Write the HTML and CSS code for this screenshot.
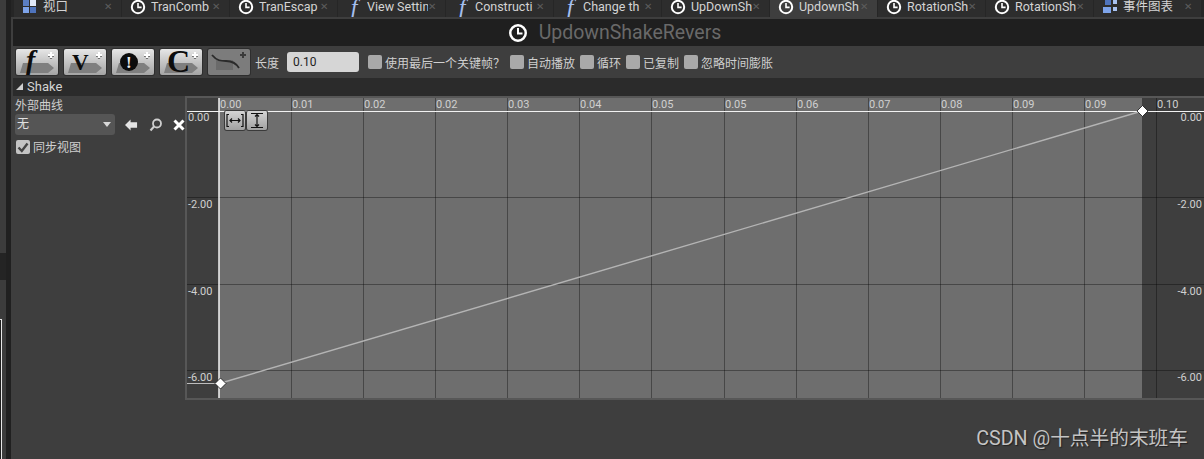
FILE: index.html
```html
<!DOCTYPE html>
<html lang="zh-CN">
	<head>
		<meta charset="UTF-8">
		<title>UpdownShakeRevers</title>
		<link rel="stylesheet" href="styles.css">
	</head>
	<body>
		<svg width="0" height="0" class="defs">
			<defs>
				<g id="clock">
					<circle cx="8" cy="8" r="6.2" fill="none" stroke="#fff" stroke-width="2"/>
					<path d="M8 4v4.4h3.6" fill="none" stroke="#fff" stroke-width="1.6"/>
				</g>
				<path id="btn-arrow" d="M7 14H32L38 19L32 24H4Z" fill="#7f7f7f"/>
				<g id="btn-plus">
					<path d="M32 7h6M35 4v6" stroke="#333" stroke-width="2.2" stroke-opacity="0.6"/>
					<path d="M32 6h6M35 3v6" stroke="#fff" stroke-width="2.2"/>
				</g>
			</defs>
		</svg>

		<div class="page">
			<div class="edge">
				<div class="edge-outer">
					<div class="edge-block"></div>
				</div>
				<div class="edge-inner"></div>
			</div>
			<div class="other-window"></div>

			<div class="main">
				<div class="tabs">
					<div class="tab">
						<svg class="tab-icon" viewBox="0 0 16 16"><path d="M1 1h6v6H1z" fill="#5b7fc4"/><path d="M8 1h6v6H8z" fill="#dfe8f8"/><path d="M1 8h6v6H1z" fill="#7ea4ea"/><path d="M8 8h6v6H8z" fill="#4f74bd"/></svg>
						<span class="tab-name">视口</span><span class="tab-x">✕</span>
					</div>
					<div class="tab">
						<svg class="tab-icon" viewBox="0 0 16 16"><use href="#clock"/></svg>
						<span class="tab-name">TranComb</span><span class="tab-x">✕</span>
					</div>
					<div class="tab">
						<svg class="tab-icon" viewBox="0 0 16 16"><use href="#clock"/></svg>
						<span class="tab-name">TranEscap</span><span class="tab-x">✕</span>
					</div>
					<div class="tab">
						<span class="tab-icon func">f</span>
						<span class="tab-name">View Settin</span><span class="tab-x">✕</span>
					</div>
					<div class="tab">
						<span class="tab-icon func">f</span>
						<span class="tab-name">Constructi</span><span class="tab-x">✕</span>
					</div>
					<div class="tab">
						<span class="tab-icon func">f</span>
						<span class="tab-name">Change th</span><span class="tab-x">✕</span>
					</div>
					<div class="tab">
						<svg class="tab-icon" viewBox="0 0 16 16"><use href="#clock"/></svg>
						<span class="tab-name">UpDownSh</span><span class="tab-x">✕</span>
					</div>
					<div class="tab active">
						<svg class="tab-icon" viewBox="0 0 16 16"><use href="#clock"/></svg>
						<span class="tab-name">UpdownSh</span><span class="tab-x">✕</span>
					</div>
					<div class="tab">
						<svg class="tab-icon" viewBox="0 0 16 16"><use href="#clock"/></svg>
						<span class="tab-name">RotationSh</span><span class="tab-x">✕</span>
					</div>
					<div class="tab">
						<svg class="tab-icon" viewBox="0 0 16 16"><use href="#clock"/></svg>
						<span class="tab-name">RotationSh</span><span class="tab-x">✕</span>
					</div>
					<div class="tab">
						<svg class="tab-icon" viewBox="0 0 16 16"><path d="M1 8h8v6H1z" fill="#7ea4ea"/><path d="M3 1h6v5H3z" fill="#4f74bd"/><path d="M11 1h4v4h-4z" fill="#a9c3f2"/><path d="M11 8h4v4h-4z" fill="#a9c3f2"/></svg>
						<span class="tab-name">事件图表</span><span class="tab-x">✕</span>
					</div>
				</div>

				<div class="title-bar">
					<svg class="title-icon" viewBox="0 0 16 16"><use href="#clock"/></svg>
					<span class="title-text">UpdownShakeRevers</span>
				</div>

				<div class="toolbar">
					<div class="tool-btn">
						<svg viewBox="0 0 42 26"><use href="#btn-arrow"/><text x="10" y="20" class="glyph glyph-f">f</text><use href="#btn-plus"/></svg>
					</div>
					<div class="tool-btn">
						<svg viewBox="0 0 42 26"><use href="#btn-arrow"/><text x="8" y="21" class="glyph glyph-v">V</text><use href="#btn-plus"/></svg>
					</div>
					<div class="tool-btn">
						<svg viewBox="0 0 42 26"><use href="#btn-arrow"/><circle cx="17" cy="13" r="9" fill="#0c0c0c"/><text x="14" y="19" class="glyph glyph-bang">!</text><use href="#btn-plus"/></svg>
					</div>
					<div class="tool-btn">
						<svg viewBox="0 0 42 26"><use href="#btn-arrow"/><text x="7" y="23" class="glyph glyph-c">C</text><use href="#btn-plus"/></svg>
					</div>
					<div class="tool-btn off">
						<svg viewBox="0 0 42 26"><path d="M8 11H25V21H8z" fill="#6a6a6a"/><path d="M4 6C9 12 13 12 18 12S28 14 31 19" fill="none" stroke="#2a2a2a" stroke-width="1.8"/><path d="M32 6h6M35 3v6" stroke="#3a3a3a" stroke-width="2"/></svg>
					</div>
					<span class="len-label">长度</span>
					<div class="len-input">0.10</div>
					<div class="opts">
						<label class="opt"><i class="box"></i>使用最后一个关键帧？</label>
						<label class="opt"><i class="box"></i>自动播放</label>
						<label class="opt"><i class="box"></i>循环</label>
						<label class="opt"><i class="box"></i>已复制</label>
						<label class="opt"><i class="box"></i>忽略时间膨胀</label>
					</div>
				</div>

				<div class="section-head"><i class="arrow-down"></i>Shake</div>

				<div class="section-body">
					<div class="curve-side">
						<div class="side-label">外部曲线</div>
						<div class="asset-row">
							<div class="select">无<i class="caret"></i></div>
							<svg class="asset-icon back" viewBox="0 0 14 12"><path d="M0 6L6 0V3H13V9H6V12Z" fill="#e4e4e4"/></svg>
							<svg class="asset-icon find" viewBox="0 0 14 14"><circle cx="8" cy="5.5" r="4" fill="none" stroke="#d0d0d0" stroke-width="1.8"/><path d="M5 8.5L1.5 12.5" stroke="#d0d0d0" stroke-width="2"/></svg>
							<svg class="asset-icon clear" viewBox="0 0 12 12"><path d="M1.5 1.5L10.5 10.5M10.5 1.5L1.5 10.5" stroke="#fff" stroke-width="3"/></svg>
						</div>
						<label class="sync"><i class="box checked"><svg viewBox="0 0 14 14"><path d="M2.5 7.5L5.8 11L11.5 3.5" fill="none" stroke="#444" stroke-width="2.4"/></svg></i>同步视图</label>
					</div>

					<div class="graph">
						<svg viewBox="187 98 1017 300" width="1017" height="300">
							<rect x="187" y="98" width="1017" height="300" fill="#3e3e3e"/>
							<rect x="219" y="98" width="923" height="300" fill="#6e6e6e"/>
							<g class="grid">
								<path d="M291 98V398M363 98V398M435 98V398M507 98V398M579 98V398M651 98V398M724 98V398M796 98V398M868 98V398M940 98V398M1012 98V398M1084 98V398M1156 98V398"/>
								<path d="M187 197H1204M187 284H1204M187 370H1204"/>
							</g>
							<path d="M219 98V398" stroke="#fff" stroke-width="1.4"/>
							<path d="M187 111.5H1204" stroke="#f2f2f2" stroke-width="1.2"/>
							<path d="M187 383.5H216" stroke="#bdbdbd"/>
							<path d="M221 383L1142 111" stroke="#b4b4b4" stroke-width="1.4"/>
							<g class="ruler">
								<text x="220" y="108">0.00</text>
								<text x="292" y="108">0.01</text>
								<text x="364" y="108">0.02</text>
								<text x="436" y="108">0.02</text>
								<text x="508" y="108">0.03</text>
								<text x="580" y="108">0.04</text>
								<text x="652" y="108">0.05</text>
								<text x="725" y="108">0.05</text>
								<text x="797" y="108">0.06</text>
								<text x="869" y="108">0.07</text>
								<text x="941" y="108">0.08</text>
								<text x="1013" y="108">0.09</text>
								<text x="1085" y="108">0.09</text>
								<text x="1157" y="108">0.10</text>
							</g>
							<g class="ruler">
								<text x="188" y="121">0.00</text>
								<text x="188" y="208">-2.00</text>
								<text x="188" y="295">-4.00</text>
								<text x="188" y="381">-6.00</text>
							</g>
							<g class="ruler right">
								<text x="1202" y="121">0.00</text>
								<text x="1202" y="208">-2.00</text>
								<text x="1202" y="295">-4.00</text>
								<text x="1202" y="381">-6.00</text>
							</g>
							<path class="key" d="M220.5 378L226 383.5L220.5 389L215 383.5Z"/>
							<path class="key" d="M1142.5 105.5L1148 111L1142.5 116.5L1137 111Z"/>
						</svg>
						<div class="fit-btns">
							<div class="fit-btn"><svg viewBox="0 0 20 18"><path d="M4 3H2V15H4M16 3H18V15H16M5 9H15M7 7L5 9L7 11M13 7L15 9L13 11" fill="none" stroke="#111" stroke-width="1.2"/></svg></div>
							<div class="fit-btn"><svg viewBox="0 0 20 18"><path d="M4 2H16M4 16H16M10 3V15M8 5L10 3L12 5M8 13L10 15L12 13" fill="none" stroke="#111" stroke-width="1.2"/></svg></div>
						</div>
					</div>
				</div>

				<div class="watermark">CSDN @十点半的末班车</div>
			</div>
		</div>
	</body>
</html>
```

FILE: styles.css
```css
body {
	margin: 0;
	background-color: #3e3e3e;
	color: #cfcfcf;
	font-family: Roboto, "Noto Sans CJK SC", sans-serif;
	font-size: 12px;
	overflow: hidden;
}

.defs {
	position: absolute;
}

.page {
	display: flex;
	position: relative;
	width: 1204px;
	height: 459px;
	overflow: hidden;
}

/* strip of the window behind, left of the editor */
.edge {
	display: flex;
	flex: 0 0 11px;
}

.edge-outer {
	flex: 0 0 6px;
	padding-top: 253px;
	background-color: #3c3c3c;
}

.edge-block {
	height: 27px;
	background-color: #242424;
}

.edge-inner {
	flex: 0 0 5px;
	background-color: #202020;
}

.other-window {
	position: absolute;
	left: -1px;
	top: 319px;
	width: 1px;
	height: 140px;
	border: 1px solid #e8e8e8;
	background-color: #1e1e1e;
}

.main {
	position: relative;
	display: flex;
	flex-direction: column;
	flex: 1;
	min-width: 0;
}

.tabs {
	display: flex;
	height: 17px;
	padding-left: 3px;
	margin-bottom: 2px;
	background-color: #262626;
	box-shadow: 0 2px 0 #3e3e3e;
}

.tab {
	display: flex;
	align-items: center;
	flex: 0 0 107px;
	height: 17px;
	padding: 0 0 4px 8px;
	box-sizing: border-box;
	margin-right: 1px;
	background-color: #2d2d2d;
	overflow: hidden;
}

.tab.active {
	background-color: #3e3e3e;
}

.tab-icon {
	flex: 0 0 16px;
	width: 16px;
	height: 16px;
	margin-right: 5px;
}

.func {
	color: #a5bfee;
	font-family: "Liberation Serif", serif;
	font-style: italic;
	font-size: 24px;
	line-height: 16px;
	text-align: center;
}

.tab-name {
	flex: 0 0 61px;
	width: 61px;
	overflow: hidden;
	white-space: nowrap;
	font-size: 12.5px;
	line-height: 17px;
	color: #d4d4d4;
}

.tab-x {
	font-size: 10px;
	color: #5c5c5c;
}

.title-bar {
	display: flex;
	align-items: center;
	justify-content: center;
	gap: 11px;
	height: 27px;
	margin-left: 2px;
	padding-left: 12px;
	background-color: #1f1f1f;
}

.title-icon {
	width: 20px;
	height: 20px;
}

.title-text {
	font-size: 19.5px;
	color: #696969;
}

.toolbar {
	display: flex;
	align-items: center;
	height: 32px;
	margin-left: 2px;
	padding-left: 3px;
	background-color: #3e3e3e;
}

.tool-btn {
	flex: 0 0 42px;
	height: 26px;
	margin-right: 6px;
	border-radius: 2px;
	background: linear-gradient(#e6e6e6, #a4a4a4);
	box-shadow: 0 0 0 1px #2e2e2e;
}

.tool-btn svg {
	display: block;
	width: 42px;
	height: 26px;
}

.tool-btn.off {
	background: #7c7c7c;
}

.glyph {
	font-family: "Liberation Serif", serif;
	font-weight: bold;
	fill: #0c0c0c;
}

.glyph-f {
	font-size: 28px;
	font-style: italic;
}

.glyph-v {
	font-size: 23px;
}

.glyph-bang {
	font-size: 17px;
	fill: #eee;
}

.glyph-c {
	font-size: 32px;
}

.len-label {
	margin-left: -1px;
	margin-right: 8px;
	font-size: 12px;
}

.len-input {
	width: 66px;
	height: 20px;
	padding-left: 6px;
	margin-right: 9px;
	border-radius: 3px;
	line-height: 20px;
	background-color: #d6d6d6;
	color: #222;
}

.opts {
	display: flex;
	gap: 5px;
}

.opt, .sync {
	display: flex;
	align-items: center;
	gap: 3px;
	white-space: nowrap;
	font-family: "Noto Sans CJK SC", sans-serif;
	font-size: 12px;
}

.box {
	display: block;
	flex: 0 0 14px;
	width: 14px;
	height: 14px;
	border-radius: 2px;
	background-color: #a9a9a9;
}

.box.checked {
	background-color: #c4c4c4;
}

.box svg {
	display: block;
}

.section-head {
	display: flex;
	align-items: center;
	gap: 4px;
	height: 18px;
	box-sizing: border-box;
	padding: 0 0 2px 3px;
	margin-left: 2px;
	background-color: #2b2b2b;
	font-size: 13px;
	color: #d4d4d4;
}

.arrow-down {
	width: 0;
	height: 0;
	border-left: 7px solid transparent;
	border-bottom: 7px solid #cfcfcf;
}

.section-body {
	display: flex;
	margin-left: 2px;
}

.curve-side {
	flex: 0 0 170px;
	padding: 3px 0 0 2px;
	box-sizing: border-box;
}

.side-label {
	height: 15px;
	line-height: 15px;
}

.asset-row {
	display: flex;
	align-items: center;
	height: 21px;
}

.select {
	position: relative;
	width: 98px;
	height: 21px;
	padding-left: 2px;
	margin-right: 10px;
	border-radius: 3px;
	background-color: #555;
	line-height: 20px;
	color: #e0e0e0;
}

.caret {
	position: absolute;
	right: 4px;
	top: 8px;
	border-left: 4px solid transparent;
	border-right: 4px solid transparent;
	border-top: 5px solid #d8d8d8;
}

.asset-icon {
	flex: none;
}

.back {
	width: 13px;
	height: 12px;
	margin-right: 11px;
}

.find {
	width: 14px;
	height: 14px;
	margin-right: 10px;
}

.clear {
	width: 12px;
	height: 12px;
}

.sync {
	margin: 3px 0 0 1px;
}

.graph {
	position: relative;
	flex: 1;
	height: 300px;
	margin-top: 2px;
	padding: 0 0 2px 2px;
	background-color: #575757;
	box-shadow: 0 -2px 0 #575757;
}

.graph > svg {
	display: block;
}

.grid path {
	stroke: #000;
	stroke-opacity: 0.35;
	fill: none;
	shape-rendering: crispEdges;
}

.ruler text {
	font-family: Roboto, sans-serif;
	font-size: 11px;
	fill: #d0d0d0;
}

.ruler.right text {
	text-anchor: end;
}

.key {
	fill: #fff;
	stroke: #111;
	stroke-width: 0.8;
}

/* zoom buttons float over the curve */
.fit-btns {
	position: absolute;
	left: 40px;
	top: 13px;
	display: flex;
	gap: 2px;
}

.fit-btn {
	width: 20px;
	height: 19px;
	border-radius: 2px;
	background: linear-gradient(#d4d4d4, #a0a0a0);
	box-shadow: 0 0 0 1px #3a3a3a;
}

.fit-btn svg {
	display: block;
	width: 20px;
	height: 19px;
}

.watermark {
	position: absolute;
	right: 16px;
	top: 428px;
	font-size: 19.7px;
	line-height: 22px;
	color: #c4c4c4;
	text-shadow: 1px 1px 1px #222;
}
```
